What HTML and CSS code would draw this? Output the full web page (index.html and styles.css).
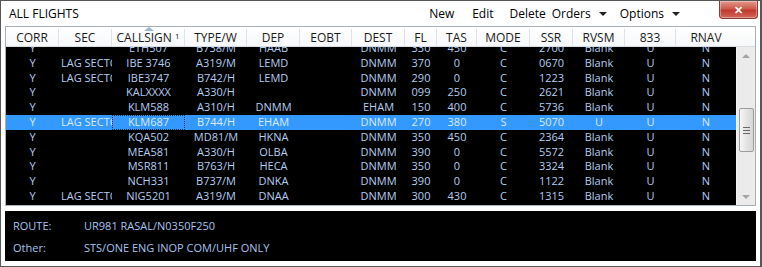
FILE: index.html
```html
<!DOCTYPE html>
<html lang="en">
<head>
    <meta charset="UTF-8">
    <title>All Flights</title>
    <link rel="stylesheet" href="styles.css">
</head>
<body>
<div class="window">
    <div class="titlebar">
        <span class="title">ALL FLIGHTS</span>
        <div class="menu">
            <span class="item">New</span>
            <span class="item edit">Edit</span>
            <span class="item delete">Delete</span>
            <span class="item orders">Orders<i class="caret"></i></span>
            <span class="item options">Options<i class="caret"></i></span>
        </div>
        <div class="close">&#x2715;</div>
    </div>

    <div class="grid">
        <div class="head cols">
            <div>CORR</div>
            <div>SEC</div>
            <div class="sorted">CALLSIGN <sup>1</sup></div>
            <div>TYPE/W</div>
            <div>DEP</div>
            <div>EOBT</div>
            <div>DEST</div>
            <div>FL</div>
            <div>TAS</div>
            <div>MODE</div>
            <div>SSR</div>
            <div>RVSM</div>
            <div>833</div>
            <div class="last">RNAV</div>
        </div>
        <div class="body">
            <div class="rows" id="rows"></div>
            <div class="scrollbar">
                <div class="arrow up"></div>
                <div class="track-top"></div>
                <div class="thumb"><span></span><span></span><span></span></div>
                <div class="track-bottom"></div>
                <div class="arrow down"></div>
            </div>
        </div>
    </div>

    <div class="detail">
        <div class="line"><span class="label">ROUTE:</span><span>UR981 RASAL/N0350F250</span></div>
        <div class="line"><span class="label">Other:</span><span>STS/ONE ENG INOP COM/UHF ONLY</span></div>
    </div>
</div>
<script>
    var flights = [
        ['Y', '', 'ETH507', 'B738/M', 'HAAB', '', 'DNMM', '330', '450', 'C', '2700', 'Blank', 'U', 'N'],
        ['Y', 'LAG SECTOR', 'IBE 3746', 'A319/M', 'LEMD', '', 'DNMM', '370', '0', 'C', '0670', 'Blank', 'U', 'N'],
        ['Y', 'LAG SECTOR', 'IBE3747', 'B742/H', 'LEMD', '', 'DNMM', '290', '0', 'C', '1223', 'Blank', 'U', 'N'],
        ['Y', '', 'KALXXXX', 'A330/H', '', '', 'DNMM', '099', '250', 'C', '2621', 'Blank', 'U', 'N'],
        ['Y', '', 'KLM588', 'A310/H', 'DNMM', '', 'EHAM', '150', '400', 'C', '5736', 'Blank', 'U', 'N'],
        ['Y', 'LAG SECTOR', 'KLM687', 'B744/H', 'EHAM', '', 'DNMM', '270', '380', 'S', '5070', 'U', 'U', 'N'],
        ['Y', '', 'KQA502', 'MD81/M', 'HKNA', '', 'DNMM', '350', '450', 'C', '2364', 'Blank', 'U', 'N'],
        ['Y', '', 'MEA581', 'A330/H', 'OLBA', '', 'DNMM', '390', '0', 'C', '5572', 'Blank', 'U', 'N'],
        ['Y', '', 'MSR811', 'B763/H', 'HECA', '', 'DNMM', '350', '0', 'C', '3324', 'Blank', 'U', 'N'],
        ['Y', '', 'NCH331', 'B737/M', 'DNKA', '', 'DNMM', '390', '0', 'C', '1122', 'Blank', 'U', 'N'],
        ['Y', 'LAG SECTOR', 'NIG5201', 'A319/M', 'DNAA', '', 'DNMM', '300', '430', 'C', '1315', 'Blank', 'U', 'N']
    ];

    var rows = document.getElementById('rows');
    flights.forEach(function (f, i) {
        var row = document.createElement('div');
        row.className = 'row cols' + (i === 5 ? ' selected' : '');
        f.forEach(function (v, c) {
            var cell = document.createElement('div');
            if (i === 5 && c === 2) cell.className = 'focus';
            cell.textContent = v;
            row.appendChild(cell);
        });
        rows.appendChild(row);
    });
</script>
</body>
</html>
```

FILE: styles.css
```css
* {
    margin: 0;
    padding: 0;
    box-sizing: border-box;
}

body {
    width: 762px;
    height: 267px;
    font-family: "Open Sans", "Noto Sans", sans-serif;
    font-size: 11px;
    background: #fff;
}

.window {
    width: 762px;
    height: 267px;
    border: 1px solid #575757;
    border-right-width: 2px;
    background: #fff;
    padding: 0 4px;
}

.titlebar {
    height: 25px;
    display: flex;
    align-items: center;
    padding-left: 4px;
    color: #000;
    font-size: 12px;
}

.menu {
    display: flex;
    margin-left: auto;
}

.item {
    display: flex;
    align-items: center;
}

.edit {
    margin-left: 18px;
}

.delete {
    margin-left: 16px;
}

.orders {
    margin-left: 6px;
}

.options {
    margin-left: 13px;
}

.caret {
    width: 0;
    height: 0;
    border-left: 4px solid transparent;
    border-right: 4px solid transparent;
    border-top: 4px solid #222;
    margin-left: 8px;
}

.close {
    align-self: flex-start;
    width: 39px;
    height: 18px;
    margin-left: 39px;
    margin-right: -2px;
    border: 1px solid #8a3a33;
    border-top: 0;
    border-radius: 0 0 4px 4px;
    background: linear-gradient(#e29a8f, #cf5a4c 45%, #c0392b 55%, #d2685a);
    color: #fff;
    font-size: 11px;
    font-weight: bold;
    display: flex;
    justify-content: center;
    align-items: center;
    box-shadow: inset 0 0 0 1px rgba(255, 255, 255, .35);
}

.grid {
    border: 1px solid #a7afb8;
    height: 180px;
    display: flex;
    flex-direction: column;
}

.cols {
    display: grid;
    grid-template-columns: 53px 53px 73px 62px 53px 52px 53px 32px 40px 53px 43px 52px 51px 60px;
}

.head {
    height: 20px;
    background: linear-gradient(#fff, #f7f8fa);
    color: #1a1a1a;
    font-size: 12px;
    border-bottom: 1px solid #d8dde3;
}

.head > div {
    display: flex;
    justify-content: center;
    align-items: center;
    border-right: 1px solid #dfe3e8;
    margin: 2px 0;
}

.head > div.last {
    border-right: 0;
}

.head sup {
    font-size: 8px;
    margin-left: 3px;
    align-self: flex-start;
    margin-top: 1px;
}

.sorted {
    position: relative;
}

.sorted::before {
    content: "";
    position: absolute;
    top: -2px;
    left: 32px;
    border-left: 5px solid transparent;
    border-right: 5px solid transparent;
    border-bottom: 4px solid #9bb6d3;
}

.body {
    flex: 1;
    display: flex;
    overflow: hidden;
}

.rows {
    width: 730px;
    background: #000;
    overflow: hidden;
}

.row {
    height: 14.8px;
    line-height: 14.8px;
    color: #b3cdf0;
    font-size: 11px;
}

.row:first-child {
    margin-top: -6px;
}

.row > div {
    text-align: center;
    white-space: nowrap;
    overflow: hidden;
    padding: 0 2px;
}

.row.selected {
    background: #3399ff;
    color: #dce9fb;
}

.focus {
    outline: 1px dotted #1c2a3a;
    outline-offset: -1px;
}

.scrollbar {
    flex: 1;
    background: #ebebeb;
    border-left: 1px solid #f4f4f4;
    display: flex;
    flex-direction: column;
    align-items: center;
}

.arrow {
    height: 17px;
    width: 100%;
    display: flex;
    justify-content: center;
    align-items: center;
}

.arrow::after {
    content: "";
    border-left: 4px solid transparent;
    border-right: 4px solid transparent;
}

.arrow.up::after {
    border-bottom: 4px solid #a3a3a3;
}

.arrow.down::after {
    border-top: 4px solid #a3a3a3;
}

.track-top {
    height: 44px;
}

.track-bottom {
    flex: 1;
}

.thumb {
    width: 15px;
    height: 44px;
    border: 1px solid #9c9c9c;
    border-radius: 2px;
    background: linear-gradient(to right, #f6f6f6, #e4e4e4 50%, #d6d6d6);
    display: flex;
    flex-direction: column;
    justify-content: center;
    align-items: center;
    gap: 2px;
}

.thumb span {
    width: 7px;
    height: 1px;
    background: #666;
}

.detail {
    margin-top: 5px;
    height: 50px;
    background: #000;
    color: #a6c4ef;
    font-size: 11px;
    padding: 7px 0 0 8px;
}

.line {
    display: flex;
    height: 22px;
    line-height: 16px;
}

.label {
    width: 71px;
}
```
